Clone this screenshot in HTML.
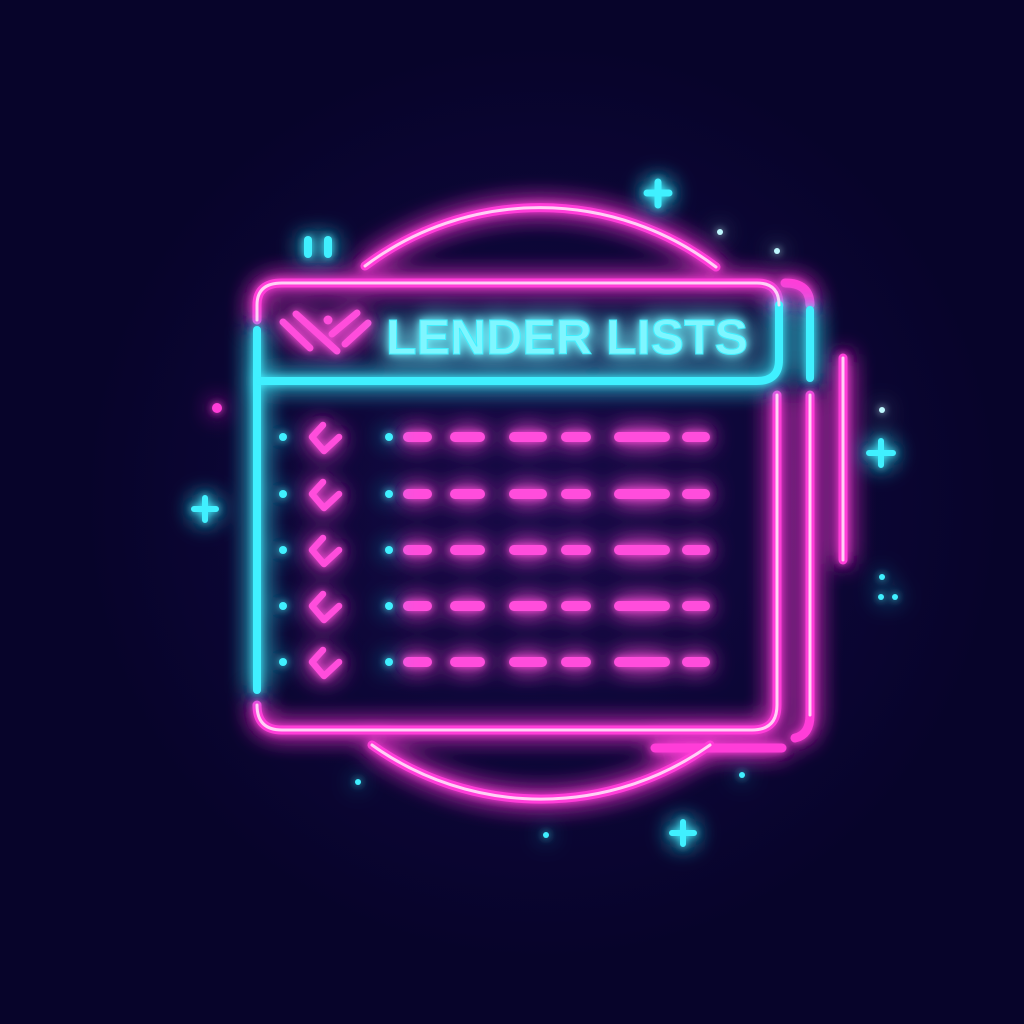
<!DOCTYPE html>
<html><head><meta charset="utf-8"><style>
html,body{margin:0;padding:0;background:#08052a;}
svg{display:block}
</style></head><body>
<svg width="1024" height="1024" viewBox="0 0 1024 1024" xmlns="http://www.w3.org/2000/svg">
<defs>
<filter id="gp" x="-20%" y="-20%" width="140%" height="140%">
<feGaussianBlur in="SourceGraphic" stdDeviation="4" result="b1"/>
<feGaussianBlur in="SourceGraphic" stdDeviation="12" result="b2"/>
<feMerge><feMergeNode in="b2"/><feMergeNode in="b2"/><feMergeNode in="b1"/><feMergeNode in="SourceGraphic"/></feMerge>
</filter>
<radialGradient id="bg" cx="0.53" cy="0.49" r="0.45">
<stop offset="0" stop-color="#140a45"/><stop offset="0.6" stop-color="#0c0636"/><stop offset="1" stop-color="#07042a"/>
</radialGradient>
</defs>
<rect width="1024" height="1024" fill="url(#bg)"/>

<g filter="url(#gp)" fill="none" stroke-linecap="round" stroke-linejoin="round">
<g stroke="#ff3cd8" stroke-width="9">
<path d="M365 266 A291 291 0 0 1 716 267"/>
<path d="M372 745 A291 291 0 0 0 710 745"/>
<path d="M257 320 V305 Q257 283 282 283 H757 Q779 283 779 305"/>
<path d="M257 705 Q257 730 282 730 H752 Q777 730 777 705 V395"/>
<path d="M785 283 Q810 283 810 305"/>
<path d="M810 395 V715 Q810 735 795 738"/>
<path d="M655 748 H782"/>
<path d="M843 358 V560"/>
<path d="M217 408 l0 0" stroke-width="10"/>
</g>
<g stroke="#ff4ddc" stroke-width="7">
<path d="M283 322 L310 348"/><path d="M296 314 L337 351"/>
<path d="M332 334 L357 313"/><path d="M345 344 L368 323"/>
<path d="M328 320 l0 0" stroke-width="9"/>
</g>
<g stroke="#ff4ddc" stroke-width="6.5">
<g id="row">
<path d="M323 425 L312 437 L324 451 L339 437"/>
<path d="M408 437 H427" stroke-width="10"/><path d="M455 437 H480" stroke-width="10"/><path d="M514 437 H542" stroke-width="10"/>
<path d="M566 437 H586" stroke-width="10"/><path d="M619 437 H665" stroke-width="10"/><path d="M687 437 H705" stroke-width="10"/>
</g>
<use href="#row" y="57"/><use href="#row" y="113"/><use href="#row" y="169"/><use href="#row" y="225"/>
</g>
</g>

<g filter="url(#gp)" fill="none" stroke-linecap="round" stroke="#3ff0ff">
<g stroke-width="8">
<path d="M257 330 V690"/>
<path d="M260 381 H757 Q779 381 779 360 V305"/>
<path d="M810 310 V378"/>
<path d="M308 240 V254"/><path d="M328 240 V254"/>
<path d="M658 182 V205 M647 193 H669" stroke-width="7"/>
<path d="M205 498 V520 M194 509 H216" stroke-width="6"/>
<path d="M881 441 V465 M869 453 H893" stroke-width="6"/>
<path d="M683 822 V844 M672 833 H694" stroke-width="6"/>
</g>
<g stroke-width="8">
<g id="dots"><path d="M283 437 l0 0"/><path d="M389 437 l0 0"/></g>
<use href="#dots" y="57"/><use href="#dots" y="113"/><use href="#dots" y="169"/><use href="#dots" y="225"/>
</g>
<g stroke-width="6" stroke="#bff8ff">
<path d="M720 232 l0 0"/><path d="M777 251 l0 0"/><path d="M882 410 l0 0"/>
<path d="M882 577 l0 0" stroke="#3ff0ff"/><path d="M881 597 l0 0" stroke="#3ff0ff"/><path d="M895 597 l0 0" stroke="#3ff0ff"/>
<path d="M358 782 l0 0" stroke="#3ff0ff"/><path d="M742 775 l0 0" stroke="#3ff0ff"/><path d="M546 835 l0 0" stroke="#3ff0ff"/>
</g>
<text x="386" y="354" font-family="'Liberation Sans', sans-serif" font-size="49" font-weight="bold" fill="#7ff6ff" stroke="#3ff0ff" stroke-width="1" textLength="362" lengthAdjust="spacingAndGlyphs">LENDER LISTS</text>
</g>

<g fill="none" stroke-linecap="round" stroke="#ffe0fa" stroke-width="3" opacity="0.9">
<path d="M365 266 A291 291 0 0 1 716 267"/>
<path d="M372 745 A291 291 0 0 0 710 745"/>
<path d="M257 320 V305 Q257 283 282 283 H757 Q779 283 779 305"/>
<path d="M257 705 Q257 730 282 730 H752 Q777 730 777 705 V395"/>
<path d="M810 395 V715"/><path d="M843 358 V560"/>
</g>
</svg>
</body></html>
